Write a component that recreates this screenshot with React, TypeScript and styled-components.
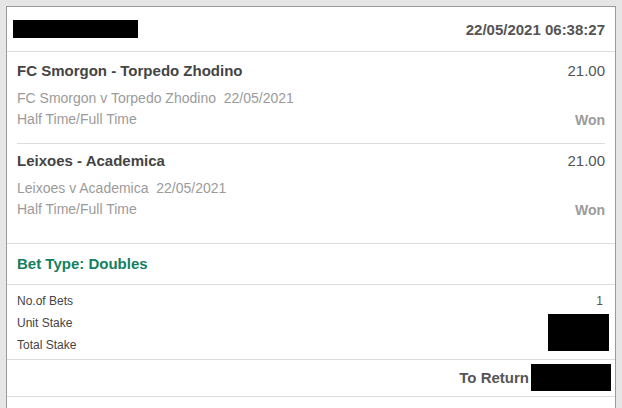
import React from 'react'
import styled, { createGlobalStyle } from 'styled-components'

const GlobalStyle = createGlobalStyle`
  html, body {
    margin: 0;
    padding: 0;
    background-color: #e6e6e6;
    font-family: 'Liberation Sans', Arial, sans-serif;
  }
  body {
    padding: 6px 6px 0;
    overflow: hidden;
  }
`

const Card = styled.div`
  background-color: #fff;
  border: 1px solid #9a9a9a;
  width: 608px;
  min-height: 420px;
`
const Header = styled.div`
  display: flex;
  justify-content: space-between;
  align-items: center;
  height: 44px;
  padding: 0 10px 0 6px;
  border-bottom: 1px solid #dcdcdc;
`
const Redacted = styled.span<{ $w: number; $h: number }>`
  display: block;
  background-color: #000;
  width: ${(p) => p.$w}px;
  height: ${(p) => p.$h}px;
`
const Stamp = styled.span`
  font-size: 15px;
  font-weight: bold;
  color: #555;
`
const Selections = styled.div`
  padding: 2px 10px 10px;
  border-bottom: 1px solid #dcdcdc;
`
const Selection = styled.div`
  display: grid;
  grid-template-columns: 1fr auto;
  padding: 7px 0 13px;
  & + & {
    border-top: 1px solid #dcdcdc;
  }
`
const Title = styled.div`
  font-size: 15px;
  font-weight: bold;
  color: #444;
  line-height: 20px;
`
const Odds = styled.div`
  font-size: 15px;
  color: #555;
  line-height: 20px;
  text-align: right;
`
const Detail = styled.div`
  font-size: 14px;
  color: #9b9b9b;
  line-height: 21px;
  white-space: pre;
`
const Info = styled.div`
  padding-top: 7px;
`
const Result = styled.div`
  align-self: end;
  font-size: 14px;
  font-weight: bold;
  color: #9b9b9b;
  line-height: 21px;
  text-align: right;
  transform: translateY(1px);
`
const BetType = styled.div`
  height: 41px;
  box-sizing: border-box;
  display: flex;
  align-items: center;
  padding: 0 10px 2px;
  font-size: 15px;
  font-weight: bold;
  color: #138060;
  border-bottom: 1px solid #dcdcdc;
`
const Stakes = styled.div`
  display: grid;
  grid-template-columns: 1fr auto;
  grid-auto-rows: 22px;
  align-items: center;
  padding: 5px 12px 3px 10px;
  font-size: 12px;
  color: #444;
  border-bottom: 1px solid #dcdcdc;
`
const StakeValue = styled.span`
  text-align: right;
  color: #555;
`
const StakeBlock = styled(Redacted)`
  grid-column: 2;
  grid-row: 2 / span 2;
  align-self: start;
  justify-self: end;
  margin: 2px -6px 0 0;
`
const ReturnRow = styled.div`
  display: flex;
  justify-content: flex-end;
  align-items: center;
  gap: 2px;
  height: 35px;
  padding: 0 4px 1px 0;
  font-size: 15px;
  font-weight: bold;
  color: #555;
  border-bottom: 1px solid #dcdcdc;
`

const legs = [
  {
    title: 'FC Smorgon - Torpedo Zhodino',
    event: 'FC Smorgon v Torpedo Zhodino  22/05/2021',
    market: 'Half Time/Full Time',
    odds: '21.00',
  },
  {
    title: 'Leixoes - Academica',
    event: 'Leixoes v Academica  22/05/2021',
    market: 'Half Time/Full Time',
    odds: '21.00',
  },
]

export default function App() {
  return (
    <>
      <GlobalStyle />
      <Card>
        <Header>
          <Redacted $w={125} $h={18} />
          <Stamp>22/05/2021 06:38:27</Stamp>
        </Header>
        <Selections>
          {legs.map((leg, i) => (
            <Selection key={leg.title + i}>
              <Title>{leg.title}</Title>
              <Odds>{leg.odds}</Odds>
              <Info>
                <Detail>{leg.event}</Detail>
                <Detail>{leg.market}</Detail>
              </Info>
              <Result>Won</Result>
            </Selection>
          ))}
        </Selections>
        <BetType>Bet Type: Doubles</BetType>
        <Stakes>
          <span>No.of Bets</span>
          <StakeValue>1</StakeValue>
          <span>Unit Stake</span>
          <StakeBlock $w={61} $h={37} />
          <span>Total Stake</span>
        </Stakes>
        <ReturnRow>
          To Return
          <Redacted $w={80} $h={27} />
        </ReturnRow>
      </Card>
    </>
  )
}
